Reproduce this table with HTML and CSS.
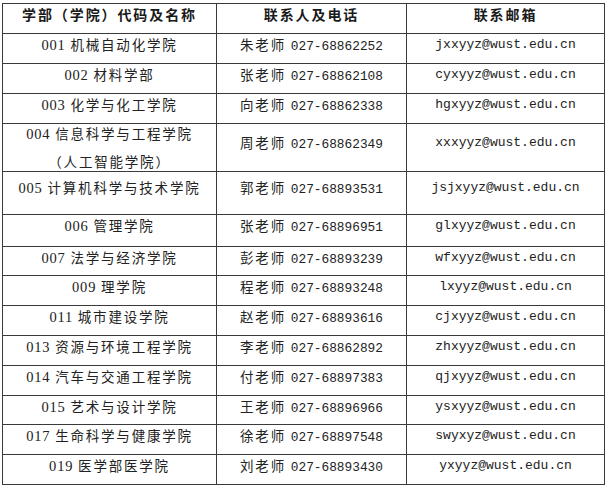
FILE: index.html
```
<!DOCTYPE html>
<html lang="zh-CN">
<head>
<meta charset="utf-8">
<title>联系方式</title>
<link rel="stylesheet" href="styles.css">
</head>
<body>
<table class="contacts">
  <colgroup>
    <col class="c1">
    <col class="c2">
    <col class="c3">
  </colgroup>
  <thead>
    <tr class="h30">
      <th>学部（学院）代码及名称</th>
      <th>联系人及电话</th>
      <th>联系邮箱</th>
    </tr>
  </thead>
  <tbody>
    <tr class="h30"><td><span class="code">001</span> 机械自动化学院</td><td>朱老师 <span class="tel">027-68862252</span></td><td class="mail">jxxyyz@wust.edu.cn</td></tr>
    <tr class="h30"><td><span class="code">002</span> 材料学部</td><td>张老师 <span class="tel">027-68862108</span></td><td class="mail">cyxyyz@wust.edu.cn</td></tr>
    <tr class="h30"><td><span class="code">003</span> 化学与化工学院</td><td>向老师 <span class="tel">027-68862338</span></td><td class="mail">hgxyyz@wust.edu.cn</td></tr>
    <tr class="h47"><td class="twoline"><div class="l1"><span class="code">004</span> 信息科学与工程学院</div><div class="l2">（人工智能学院）</div></td><td class="mid">周老师 <span class="tel">027-68862349</span></td><td class="mail mid">xxxyyz@wust.edu.cn</td></tr>
    <tr class="h43 pad6"><td><span class="code">005</span> 计算机科学与技术学院</td><td>郭老师 <span class="tel">027-68893531</span></td><td class="mail">jsjxyyz@wust.edu.cn</td></tr>
    <tr class="h33"><td><span class="code">006</span> 管理学院</td><td>张老师 <span class="tel">027-68896951</span></td><td class="mail">glxyyz@wust.edu.cn</td></tr>
    <tr class="h29"><td><span class="code">007</span> 法学与经济学院</td><td>彭老师 <span class="tel">027-68893239</span></td><td class="mail">wfxyyz@wust.edu.cn</td></tr>
    <tr class="h30"><td><span class="code">009</span> 理学院</td><td>程老师 <span class="tel">027-68893248</span></td><td class="mail">lxyyz@wust.edu.cn</td></tr>
    <tr class="h30"><td><span class="code">011</span> 城市建设学院</td><td>赵老师 <span class="tel">027-68893616</span></td><td class="mail">cjxyyz@wust.edu.cn</td></tr>
    <tr class="h30"><td><span class="code">013</span> 资源与环境工程学院</td><td>李老师 <span class="tel">027-68862892</span></td><td class="mail">zhxyyz@wust.edu.cn</td></tr>
    <tr class="h30"><td><span class="code">014</span> 汽车与交通工程学院</td><td>付老师 <span class="tel">027-68897383</span></td><td class="mail">qjxyyz@wust.edu.cn</td></tr>
    <tr class="h29"><td><span class="code">015</span> 艺术与设计学院</td><td>王老师 <span class="tel">027-68896966</span></td><td class="mail">ysxyyz@wust.edu.cn</td></tr>
    <tr class="h30"><td><span class="code">017</span> 生命科学与健康学院</td><td>徐老师 <span class="tel">027-68897548</span></td><td class="mail">swyxyz@wust.edu.cn</td></tr>
    <tr class="h30"><td><span class="code">019</span> 医学部医学院</td><td>刘老师 <span class="tel">027-68893430</span></td><td class="mail">yxyyz@wust.edu.cn</td></tr>
  </tbody>
</table>
</body>
</html>
```
FILE: styles.css
```
html, body {
  margin: 0;
  padding: 0;
  background: #ffffff;
}

body {
  font-family: "Noto Sans CJK SC", "Liberation Serif", serif;
  color: #222222;
}

.contacts {
  border-collapse: collapse;
  table-layout: fixed;
  width: 602px;
  margin: 3px 0 0 2px;
}

.c1 { width: 214px; }
.c2 { width: 190px; }
.c3 { width: 198px; }

.contacts th,
.contacts td {
  border: 1px solid #3a3a3a;
  padding: 0;
  vertical-align: top;
  text-align: center;
  line-height: 21px;
  white-space: nowrap;
  overflow: hidden;
}

.contacts th {
  font-size: 14px;
  font-weight: bold;
  letter-spacing: 1.9px;
  color: #1a1a1a;
}

.contacts td {
  font-size: 13.5px;
  font-weight: 400;
  letter-spacing: 1.8px;
}

.h29 { height: 29px; }
.h30 { height: 30px; }
.h33 { height: 32px; }
.h43 { height: 43px; }
.h47 { height: 46px; }

.pad6 td { padding-top: 5px; }

.code {
  font-family: "Liberation Serif", serif;
  font-size: 14.5px;
  letter-spacing: 0.8px;
}

.tel {
  font-family: "Liberation Mono", monospace;
  font-size: 12.8px;
  letter-spacing: 0;
}

.contacts td.mail {
  font-family: "Liberation Mono", monospace;
  font-size: 13px;
  letter-spacing: 0;
}

.contacts td.mid { padding-top: 8px; }

.twoline .l1 { line-height: 19px; }
.twoline .l2 { line-height: 19px; margin-top: 8px; }
```
